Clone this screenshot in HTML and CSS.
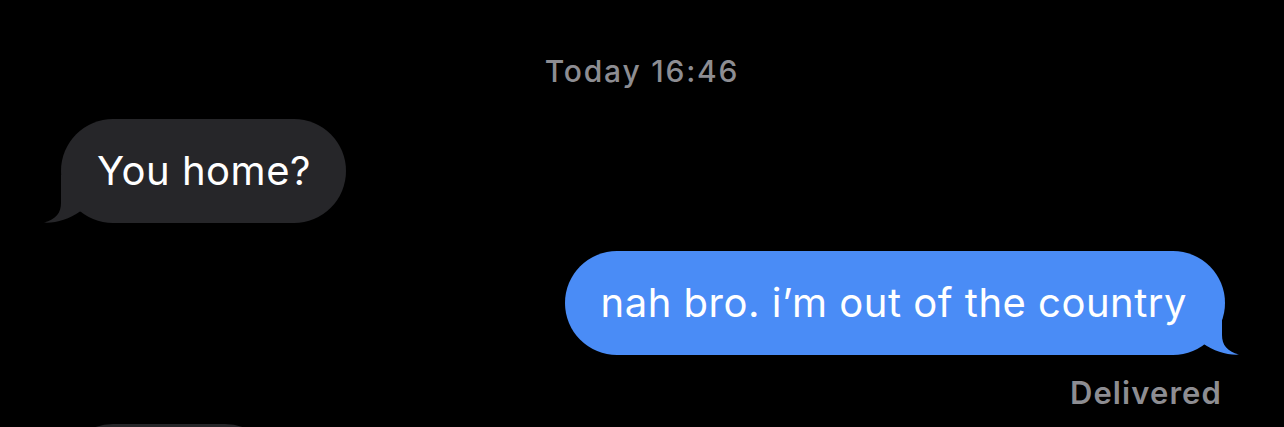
FILE: index.html
```html
<!DOCTYPE html>
<html>

<head>
  <meta charset="UTF-8">
  <title>Messages</title>
  <link rel="stylesheet" href="styles.css">
</head>

<body>
  <div class="thread">
    <div class="stamp">Today 16:46</div>

    <div class="row in">
      <div class="bubble grey">
        You home?
        <svg class="tail tailLeft" width="44" height="48" viewBox="0 0 44 48">
          <path d="M18 0 L18 28 C18 38 13 44 1 47.6 C12 48.4 26 44.5 37 36.6 L44 36 L44 0 Z" />
        </svg>
      </div>
    </div>

    <div class="row out">
      <div class="bubble blue">
        nah bro. i’m out of the country
        <svg class="tail tailRight" width="44" height="48" viewBox="0 0 44 48">
          <path d="M26 0 L26 28 C26 38 31 44 43 47.6 C32 48.4 18 44.5 7 36.6 L0 36 L0 0 Z" />
        </svg>
      </div>
    </div>
    <div class="status">Delivered</div>

    <div class="row in">
      <div class="bubble grey next"></div>
    </div>
  </div>
</body>

</html>
```

FILE: styles.css
```css
body {
  margin: 0;
  background: #000;
  font-family: Inter, "Noto Sans", sans-serif;
  overflow: hidden;
}

.thread {
  display: flex;
  flex-direction: column;
  box-sizing: border-box;
  height: 427px;
  overflow: hidden;
  padding-top: 53px;
}

.stamp {
  text-align: center;
  color: #8d8d92;
  font-size: 30px;
  font-weight: 500;
  letter-spacing: 1.8px;
  line-height: 36px;
  margin-bottom: 30px;
}

.row {
  display: flex;
  flex-shrink: 0;
}

.row.in {
  justify-content: flex-start;
  padding-left: 61px;
}

.row.out {
  justify-content: flex-end;
  padding-right: 59px;
  margin-top: 28px;
}

.bubble {
  position: relative;
  font-size: 40px;
  letter-spacing: 0.5px;
  line-height: 48px;
  padding: 28px 36px;
  border-radius: 52px;
  color: #fff;
  white-space: nowrap;
}

.grey {
  background: #262629;
  padding-right: 35px;
}

.grey .tail path {
  fill: #262629;
}

.blue {
  background: #4a8cf6;
  padding-right: 38px;
}

.blue .tail path {
  fill: #4a8cf6;
}

.tail {
  position: absolute;
  bottom: 0;
}

.tailLeft {
  left: -18px;
}

.tailRight {
  right: -15px;
}

.status {
  align-self: flex-end;
  margin-right: 62px;
  margin-top: 20px;
  color: #8d8d92;
  font-size: 31px;
  font-weight: 600;
  letter-spacing: 1.1px;
  line-height: 36px;
}

/* next incoming bubble, cut off by the bottom edge */
.next {
  margin-top: 13px;
  width: 216px;
  height: 104px;
  padding: 0;
  flex-shrink: 0;
}
```
